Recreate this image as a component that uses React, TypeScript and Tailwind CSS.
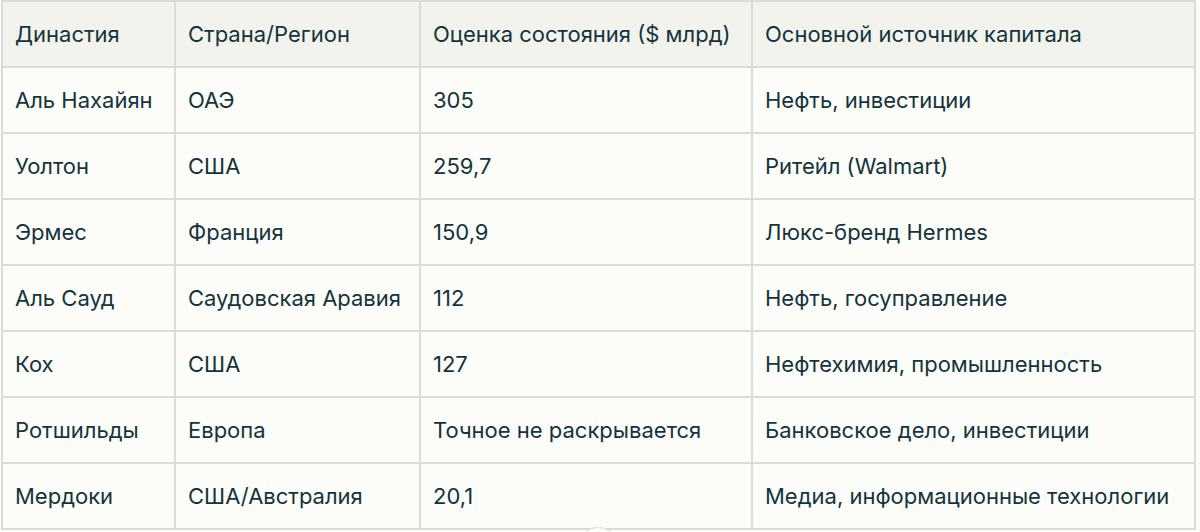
const rows = [
  ["Аль Нахайян", "ОАЭ", "305", "Нефть, инвестиции"],
  ["Уолтон", "США", "259,7", "Ритейл (Walmart)"],
  ["Эрмес", "Франция", "150,9", "Люкс-бренд Hermes"],
  ["Аль Сауд", "Саудовская Аравия", "112", "Нефть, госуправление"],
  ["Кох", "США", "127", "Нефтехимия, промышленность"],
  ["Ротшильды", "Европа", "Точное не раскрывается", "Банковское дело, инвестиции"],
  ["Мердоки", "США/Австралия", "20,1", "Медиа, информационные технологии"],
]

const headers = ["Династия", "Страна/Регион", "Оценка состояния ($ млрд)", "Основной источник капитала"]

export default function App() {
  return (
    <div className="relative h-[532px] w-[1200px] overflow-hidden bg-[#fcfcf9] pl-[1px] font-['Inter',sans-serif] text-[22px] text-[#13343b]">
      <table className="w-[1193px] table-fixed border-collapse">
        <colgroup>
          <col className="w-[173px]" />
          <col className="w-[245px]" />
          <col className="w-[332px]" />
          <col className="w-[443px]" />
        </colgroup>
        <thead>
          <tr className="h-[66px] bg-[#f3f3ee]">
            {headers.map((h) => (
              <th key={h} className="border-2 border-[#dcdcd6] px-[12px] text-left font-normal whitespace-nowrap">
                {h}
              </th>
            ))}
          </tr>
        </thead>
        <tbody>
          {rows.map((r) => (
            <tr key={r[0]} className="h-[66px]">
              {r.map((c, i) => (
                <td key={i} className="border-2 border-[#dcdcd6] px-[12px] whitespace-nowrap">
                  {c}
                </td>
              ))}
            </tr>
          ))}
        </tbody>
      </table>
      <div className="absolute left-[578px] top-[527px] h-10 w-10 rounded-full border border-[#e2e2dc] bg-[#fcfcf9] shadow-sm" />
    </div>
  )
}
